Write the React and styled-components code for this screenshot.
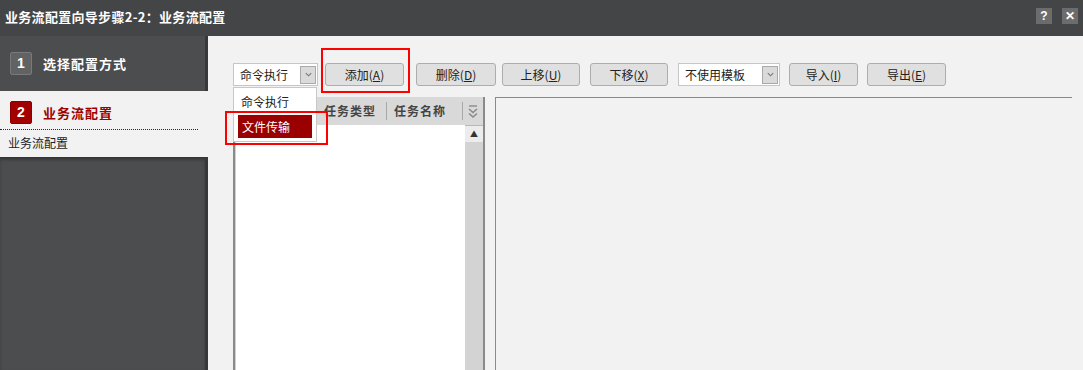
import React from 'react';
import styled, {createGlobalStyle} from 'styled-components';

const GlobalStyle = createGlobalStyle`
    html, body {
        margin: 0;
        padding: 0;
        background: #f2f2f2;
        overflow: hidden;
    }
    body {
        font-family: "Noto Sans CJK SC", "Liberation Sans", sans-serif;
    }
`;

const Chevron = ({size = 9, color = '#777'}) => (
    <svg width={size} height={size} viewBox="0 0 10 10">
        <path d="M2 3.5 L5 6.5 L8 3.5" fill="none" stroke={color} strokeWidth="1.2"/>
    </svg>
);

const DoubleChevron = () => (
    <svg width="12" height="16" viewBox="0 0 12 16">
        <path d="M2 2 L10 2" stroke="#8a8a8a" strokeWidth="1.4"/>
        <path d="M2 5 L6 8.5 L10 5" fill="none" stroke="#8a8a8a" strokeWidth="1.6"/>
        <path d="M2 9.5 L6 13 L10 9.5" fill="none" stroke="#8a8a8a" strokeWidth="1.6"/>
    </svg>
);

function Label({text, hotkey}) {
    return <span>{text}(<u>{hotkey}</u>)</span>;
}

export default function App() {
    return <Window>
        <GlobalStyle/>
        <TitleBar>
            <Title>业务流配置向导步骤2-2：业务流配置</Title>
            <TitleButtons>
                <TitleButton>?</TitleButton>
                <TitleButton>✕</TitleButton>
            </TitleButtons>
        </TitleBar>
        <Body>
            <Sidebar>
                <Step>
                    <Badge>1</Badge>
                    <StepName>选择配置方式</StepName>
                </Step>
                <ActiveStep>
                    <ActiveHead>
                        <Badge $active>2</Badge>
                        <StepName $active>业务流配置</StepName>
                    </ActiveHead>
                    <SubItem>业务流配置</SubItem>
                </ActiveStep>
                <SidebarRest/>
            </Sidebar>
            <Main>
                <Toolbar>
                    <Select $w={85}>
                        <span>命令执行</span>
                        <ArrowBox><Chevron/></ArrowBox>
                        <DropList>
                            <DropItem>命令执行</DropItem>
                            <DropItem $selected>文件传输</DropItem>
                        </DropList>
                    </Select>
                    <Button $w={79} $ml={7}><Label text="添加" hotkey="A"/></Button>
                    <Button $w={80} $ml={12}><Label text="删除" hotkey="D"/></Button>
                    <Button $w={78} $ml={6}><Label text="上移" hotkey="U"/></Button>
                    <Button $w={78} $ml={10}><Label text="下移" hotkey="X"/></Button>
                    <Select $w={102} $ml={10}>
                        <span>不使用模板</span>
                        <ArrowBox><Chevron/></ArrowBox>
                    </Select>
                    <Button $w={69} $ml={9}><Label text="导入" hotkey="I"/></Button>
                    <Button $w={79} $ml={9}><Label text="导出" hotkey="E"/></Button>
                </Toolbar>
                <Panels>
                    <ListPanel>
                        <Header>
                            <HeaderCell $w={82}/>
                            <HeaderCell $w={70}>任务类型</HeaderCell>
                            <HeaderCell $w={76}>任务名称</HeaderCell>
                            <HeaderIcon><DoubleChevron/></HeaderIcon>
                        </Header>
                        <ListBody>
                            <Rows/>
                            <ScrollBar>
                                <ScrollButton>▲</ScrollButton>
                            </ScrollBar>
                        </ListBody>
                    </ListPanel>
                    <DetailPanel/>
                </Panels>
                <Highlight $l={113} $t={12} $w={89} $h={45}/>
                <Highlight $l={17} $t={75} $w={103} $h={34}/>
            </Main>
        </Body>
    </Window>;
}

const Window = styled.div`
    width: 1083px;
    height: 370px;
    display: flex;
    flex-direction: column;
    overflow: hidden;
    background: #f2f2f2;
`;

const TitleBar = styled.div`
    height: 36px;
    box-sizing: border-box;
    padding: 0 5px 4px 5px;
    background: #444547;
    display: flex;
    align-items: center;
    justify-content: space-between;
`;

const Title = styled.div`
    color: #fff;
    font-size: 13px;
    font-weight: bold;
    letter-spacing: 0.3px;
`;

const TitleButtons = styled.div`
    display: flex;
    gap: 10px;
    margin-right: 0;
`;

const TitleButton = styled.div`
    width: 16px;
    height: 16px;
    background: #6b6c6e;
    color: #fff;
    font-family: "Liberation Sans", sans-serif;
    font-weight: bold;
    font-size: 12px;
    line-height: 16px;
    text-align: center;
`;

const Body = styled.div`
    flex: 1;
    display: flex;
    min-height: 0;
`;

const Sidebar = styled.div`
    width: 205px;
    border-right: 3px solid #37383a;
    background: #4c4d4f;
    display: flex;
    flex-direction: column;
`;

const Step = styled.div`
    height: 55px;
    display: flex;
    align-items: center;
    padding-left: 10px;
    padding-bottom: 1px;
    box-sizing: border-box;
`;

const Badge = styled.div`
    width: 22px;
    height: 23px;
    box-sizing: border-box;
    border-radius: 2px;
    border: 1px solid ${p => p.$active ? '#8a0000' : '#77797b'};
    background: ${p => p.$active ? '#a30000' : '#606264'};
    color: #fff;
    font-family: "Liberation Sans", sans-serif;
    font-weight: bold;
    font-size: 14px;
    line-height: 21px;
    text-align: center;
`;

const StepName = styled.div`
    margin-left: 11px;
    font-size: 13px;
    font-weight: bold;
    letter-spacing: 1px;
    color: ${p => p.$active ? '#9c0000' : '#fff'};
`;

const ActiveStep = styled.div`
    height: 66px;
    margin-right: -3px;
    background: #f2f2f2;
    display: flex;
    flex-direction: column;
`;

const ActiveHead = styled.div`
    display: flex;
    align-items: center;
    padding: 10px 0 0 10px;
    height: 23px;
    margin: 0 10px 5px 0;
    padding-bottom: 5px;
    border-bottom: 1px dotted #8b0000;
    margin-left: 0;
    & > ${Badge} {
        margin-left: 0;
    }
`;

const SubItem = styled.div`
    padding-left: 8px;
    font-size: 12px;
    color: #222;
    line-height: 16px;
`;

const SidebarRest = styled.div`
    flex: 1;
    border-top: 1px solid #333436;
    box-shadow: inset 0 2px 3px rgba(0, 0, 0, 0.25);
`;

const Main = styled.div`
    flex: 1;
    position: relative;
    padding: 27px 11px 0 25px;
    display: flex;
    flex-direction: column;
    min-width: 0;
`;

const Toolbar = styled.div`
    display: flex;
    align-items: center;
    height: 23px;
`;

const Select = styled.div`
    position: relative;
    width: ${p => p.$w}px;
    margin-left: ${p => p.$ml || 0}px;
    height: 23px;
    box-sizing: border-box;
    border: 1px solid #c6c6c6;
    background: #fff;
    display: flex;
    align-items: center;
    justify-content: space-between;
    padding: 0 1px 0 6px;
    font-size: 12px;
    color: #222;
`;

const ArrowBox = styled.div`
    width: 16px;
    height: 18px;
    box-sizing: border-box;
    border: 1px solid #a9a9a9;
    background: #dadada;
    display: flex;
    align-items: center;
    justify-content: center;
`;

const DropList = styled.div`
    position: absolute;
    left: -1px;
    top: 23px;
    width: 84px;
    height: 55px;
    box-sizing: border-box;
    border: 1px solid #c8c8c8;
    background: #fff;
    padding: 0 4px;
    z-index: 2;
`;

const DropItem = styled.div`
    height: ${p => p.$selected ? 23 : 25}px;
    line-height: ${p => p.$selected ? 23 : 27}px;
    margin-bottom: 2px;
    padding-left: ${p => p.$selected ? 4 : 3}px;
    font-size: 12px;
    color: ${p => p.$selected ? '#fff' : '#222'};
    background: ${p => p.$selected ? '#9b0000' : 'transparent'};
`;

const Button = styled.div`
    width: ${p => p.$w}px;
    margin-left: ${p => p.$ml || 0}px;
    height: 23px;
    box-sizing: border-box;
    border: 1px solid #adadad;
    border-radius: 3px;
    background: #e0e0e0;
    font-size: 12px;
    color: #222;
    display: flex;
    align-items: center;
    justify-content: center;
    u {
        text-underline-offset: 1px;
    }
`;

const Panels = styled.div`
    flex: 1;
    display: flex;
    gap: 10px;
    margin-top: 11px;
`;

const ListPanel = styled.div`
    width: 252px;
    box-sizing: border-box;
    border-left: 2px solid #8a8a8a;
    border-right: 2px solid #8a8a8a;
    background: #fff;
    display: flex;
    flex-direction: column;
`;

const Header = styled.div`
    height: 28px;
    background: #d9d9d9;
    display: flex;
    align-items: center;
`;

const HeaderCell = styled.div`
    width: ${p => p.$w}px;
    height: 18px;
    box-sizing: border-box;
    border-right: 1px solid #a8a8a8;
    padding-left: 7px;
    font-size: 12px;
    font-weight: bold;
    letter-spacing: 1px;
    color: #444;
    line-height: 18px;
`;

const HeaderIcon = styled.div`
    flex: 1;
    display: flex;
    justify-content: center;
    align-items: center;
    padding-top: 2px;
`;

const ListBody = styled.div`
    flex: 1;
    display: flex;
`;

const Rows = styled.div`
    flex: 1;
    border-left: 1px solid #d0d0d8;
`;

const ScrollBar = styled.div`
    width: 18px;
    background: #d3d3d3;
    border-top: 1px solid #b8b8b8;
`;

const ScrollButton = styled.div`
    height: 16px;
    background: #ececec;
    color: #333;
    font-size: 8px;
    line-height: 16px;
    text-align: center;
`;

const DetailPanel = styled.div`
    flex: 1;
    border-left: 1px solid #8a8a8a;
    border-top: 1px solid #8a8a8a;
    background: #f2f2f2;
`;

const Highlight = styled.div`
    position: absolute;
    left: ${p => p.$l}px;
    top: ${p => p.$t}px;
    width: ${p => p.$w}px;
    height: ${p => p.$h}px;
    box-sizing: border-box;
    border: 2px solid #ff0000;
    z-index: 3;
    pointer-events: none;
`;
